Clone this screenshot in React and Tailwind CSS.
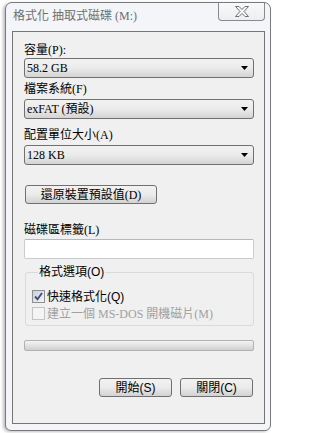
import React from "react";

const serif = "font-['Liberation_Serif','Noto_Sans_CJK_TC',serif]";
const sans = "font-['Liberation_Sans','Noto_Sans_CJK_TC',sans-serif]";

function Arrow() {
  return (
    <svg width="7" height="4" viewBox="0 0 7 4" className="shrink-0">
      <polygon points="0,0 7,0 3.5,4" fill="#000" />
    </svg>
  );
}

function Select({ value, className = "" }) {
  return (
    <div
      className={`h-[20px] w-[230px] rounded-[3px] border border-[#707070] bg-gradient-to-b from-[#f2f2f2] via-[#ebebeb] via-50% to-[#d4d4d4] flex items-center justify-between pl-[2px] pr-[5px] text-[12px] leading-[16px] text-black ${serif} ${className}`}
    >
      <span>{value}</span>
      <Arrow />
    </div>
  );
}

function Button({ children, className = "" }) {
  return (
    <div
      className={`h-[19px] rounded-[3px] border border-[#707070] bg-gradient-to-b from-[#f2f2f2] via-[#ebebeb] via-50% to-[#d2d2d2] flex items-center justify-center text-[12px] leading-[16px] text-black ${className}`}
    >
      {children}
    </div>
  );
}

function Checked() {
  return (
    <div className="w-[13px] h-[13px] border border-[#8e8f8f] bg-gradient-to-br from-[#cbcfd5] to-[#f6f6f6] flex items-center justify-center shrink-0">
      <svg width="9" height="9" viewBox="0 0 9 9">
        <path d="M1 4.5 L3.5 7.2 L8 1" fill="none" stroke="#3d4f8a" strokeWidth="1.9" />
      </svg>
    </div>
  );
}

function Unchecked() {
  return (
    <div className="w-[13px] h-[13px] border border-[#c4c4c4] bg-[#f4f4f4] shrink-0" />
  );
}

export default function App() {
  return (
    <div className="w-[273px] h-[433px] bg-white pt-[2px] pb-[2px] pl-[5px] pr-[2px]">
      <div className="h-full rounded-t-[7px] rounded-b-[6px] border border-[#7a7a7a] bg-[#f3f5f8] shadow-[-2px_1px_3px_rgba(0,0,0,0.25)] flex flex-col pl-[6px] pr-[5px] pb-[6px]">
        <div className="h-[28px] flex items-start justify-between shrink-0">
          <div className={`mt-[5px] ml-[1px] text-[12px] leading-[16px] text-[#6f6f6f] whitespace-nowrap ${serif}`}>
            格式化 抽取式磁碟 (M:)
          </div>
          <div className="w-[47px] h-[18px] border border-t-0 border-[#8a8a8a] rounded-b-[4px] bg-gradient-to-b from-[#f8f9fa] to-[#eceef0] flex items-center justify-center">
            <svg width="14" height="11" viewBox="0 0 14 11">
              <polygon
                points="0.5,0.5 4,0.5 7,3.5 10,0.5 13.5,0.5 9,5.5 13.5,10.5 10,10.5 7,7.5 4,10.5 0.5,10.5 5,5.5"
                fill="#f7f7f7"
                stroke="#707070"
                strokeWidth="1"
                strokeLinejoin="round"
              />
            </svg>
          </div>
        </div>

        <div className={`flex-1 border border-[#767676] bg-[#f0f0f0] flex flex-col pl-[11px] pr-[9px] text-[12px] leading-[16px] text-black ${serif}`}>
          <div className="mt-[10px] h-[16px]">容量(P):</div>
          <Select value="58.2 GB" />

          <div className="mt-[3px] h-[16px]">檔案系統(F)</div>
          <Select value="exFAT (預設)" className="mt-[2px]" />

          <div className="mt-[8px] h-[16px]">配置單位大小(A)</div>
          <Select value="128 KB" className="mt-[2px]" />

          <Button className="mt-[20px] ml-[1px] w-[132px]">還原裝置預設值(D)</Button>

          <div className="mt-[18px] h-[16px]">磁碟區標籤(L)</div>
          <div className="mt-[1px] h-[20px] w-[230px] rounded-[2px] border border-[#c9cdd2] border-t-[#b4b8bd] bg-white" />

          <fieldset className="mt-[5px] ml-[1px] w-[229px] rounded-[3px] border border-[#d5dbe0] pl-[6px] pb-[3px]">
            <legend className={`ml-[6px] px-[1px] h-[16px] text-[12px] leading-[16px] ${sans}`}>格式選項(O)</legend>
            <div className="mt-[8px] h-[17px] flex items-center gap-[2px]">
              <Checked />
              <span className={sans}>快速格式化(Q)</span>
            </div>
            <div className="h-[17px] flex items-center gap-[2px] text-[#a0a0a0]">
              <Unchecked />
              <span>建立一個 MS-DOS 開機磁片(M)</span>
            </div>
          </fieldset>

          <div className="mt-[14px] h-[11px] w-[230px] rounded-[2px] border border-[#b2b2b2] bg-gradient-to-b from-[#f4f4f4] via-[#e2e2e2] to-[#cfcfcf]" />

          <div className={`mt-[27px] flex justify-end gap-[8px] pr-[2px] ${sans}`}>
            <Button className="w-[73px]">開始(S)</Button>
            <Button className="w-[73px]">關閉(C)</Button>
          </div>
        </div>
      </div>
    </div>
  );
}
